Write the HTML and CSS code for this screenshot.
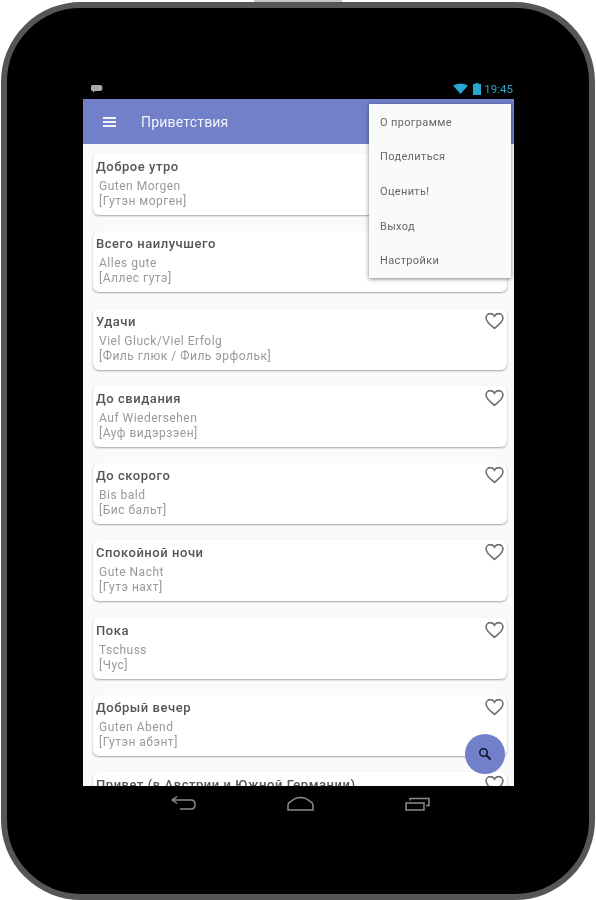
FILE: index.html
```html
<!DOCTYPE html>
<html lang="ru">
<head>
    <meta charset="UTF-8">
    <title>Приветствия</title>
    <link rel="stylesheet" href="styles.css">
</head>
<body>
    <div class="top-button"></div>
    <div class="device">
        <div class="status-bar">
            <svg class="notif" width="13" height="9" viewBox="0 0 13 9"><path d="M1 2.500 Q1 1 2.500 1 H10 Q12.500 1 12.500 4 Q12.500 7 10 7 L5 7 L3 8.500 L3 7 Q1 7 1 5.500 Z" fill="#a8a8a8"/></svg>
            <div class="status-right">
                <svg width="15" height="11" viewBox="0 0 15 11"><path d="M0 2.500 Q7.500 -1.500 15 2.500 L7.500 11 Z" fill="#2aa5cf"/></svg>
                <svg width="8" height="12" viewBox="0 0 8 12"><path d="M2.500 0 H5.500 V1 H8 V12 H0 V1 H2.500 Z" fill="#2aa5cf"/></svg>
                <span class="clock">19:45</span>
            </div>
        </div>

        <div class="screen">
            <div class="toolbar">
                <svg width="13" height="10" viewBox="0 0 13 10"><path d="M0 0 H13 V2 H0 Z M0 4 H13 V6 H0 Z M0 8 H13 V10 H0 Z" fill="#f2f3fb"/></svg>
                <span class="toolbar-title">Приветствия</span>
            </div>

            <div class="list">
                <div class="card">
                    <div class="card-title">Доброе утро</div>
                    <div class="card-text">Guten Morgen</div>
                    <div class="card-text">[Гутэн морген]</div>
                    <svg class="heart" viewBox="0 0 18 16"><use href="#heart"/></svg>
                </div>
                <div class="card">
                    <div class="card-title">Всего наилучшего</div>
                    <div class="card-text">Alles gute</div>
                    <div class="card-text">[Аллес гутэ]</div>
                    <svg class="heart" viewBox="0 0 18 16"><use href="#heart"/></svg>
                </div>
                <div class="card">
                    <div class="card-title">Удачи</div>
                    <div class="card-text">Viel Gluck/Viel Erfolg</div>
                    <div class="card-text">[Филь глюк / Филь эрфольк]</div>
                    <svg class="heart" viewBox="0 0 18 16"><use href="#heart"/></svg>
                </div>
                <div class="card">
                    <div class="card-title">До свидания</div>
                    <div class="card-text">Auf Wiedersehen</div>
                    <div class="card-text">[Ауф видэрзэен]</div>
                    <svg class="heart" viewBox="0 0 18 16"><use href="#heart"/></svg>
                </div>
                <div class="card">
                    <div class="card-title">До скорого</div>
                    <div class="card-text">Bis bald</div>
                    <div class="card-text">[Бис бальт]</div>
                    <svg class="heart" viewBox="0 0 18 16"><use href="#heart"/></svg>
                </div>
                <div class="card">
                    <div class="card-title">Спокойной ночи</div>
                    <div class="card-text">Gute Nacht</div>
                    <div class="card-text">[Гутэ нахт]</div>
                    <svg class="heart" viewBox="0 0 18 16"><use href="#heart"/></svg>
                </div>
                <div class="card">
                    <div class="card-title">Пока</div>
                    <div class="card-text">Tschuss</div>
                    <div class="card-text">[Чус]</div>
                    <svg class="heart" viewBox="0 0 18 16"><use href="#heart"/></svg>
                </div>
                <div class="card">
                    <div class="card-title">Добрый вечер</div>
                    <div class="card-text">Guten Abend</div>
                    <div class="card-text">[Гутэн абэнт]</div>
                    <svg class="heart" viewBox="0 0 18 16"><use href="#heart"/></svg>
                </div>
                <div class="card">
                    <div class="card-title">Привет (в Австрии и Южной Германии)</div>
                    <svg class="heart" viewBox="0 0 18 16"><use href="#heart"/></svg>
                </div>
            </div>

            <div class="menu">
                <div class="menu-item">О программе</div>
                <div class="menu-item">Поделиться</div>
                <div class="menu-item">Оценить!</div>
                <div class="menu-item">Выход</div>
                <div class="menu-item">Настройки</div>
            </div>

            <div class="fab">
                <svg width="14" height="14" viewBox="0 0 14 14"><circle cx="5.500" cy="5.500" r="3.700" fill="none" stroke="#10162e" stroke-width="1.600"/><path d="M8.300 8.300 L12.500 12.500" stroke="#10162e" stroke-width="2"/></svg>
            </div>
        </div>

        <div class="nav-bar">
            <svg width="25" height="15" viewBox="0 0 25 15" fill="none" stroke="#8c8c8c" stroke-width="1.500"><path d="M1 4 H20 Q24 4 24 8.500 Q24 13 20 13 H9 M6 0.500 L1.200 4 L6 7.500"/></svg>
            <svg width="27" height="15" viewBox="0 0 27 15" fill="none" stroke="#8c8c8c" stroke-width="1.500"><path d="M1 14 V9 Q1 7 3 6 Q8 1.500 13.500 1.500 Q19 1.500 24 6 Q26 7 26 9 V14 Z"/></svg>
            <svg width="25" height="14" viewBox="0 0 25 14" fill="none" stroke="#8c8c8c" stroke-width="1.500"><path d="M1 6 H19 V13 H1 Z M5 3.500 V1.500 H24 V8.500 H21"/></svg>
        </div>
    </div>

    <svg class="defs" width="0" height="0">
        <symbol id="heart" viewBox="0 0 18 16">
            <path d="M9 15 C3 10 1 8 1 5 C1 2.500 3 1 5 1 C6.800 1 8.200 2 9 3.500 C9.800 2 11.200 1 13 1 C15 1 17 2.500 17 5 C17 8 15 10 9 15 Z" fill="none" stroke="#6e6e6e" stroke-width="1.500"/>
        </symbol>
    </svg>
</body>
</html>
```

FILE: styles.css
```css
body {
    margin: 0;
    height: 900px;
    overflow: hidden;
    background: #fff;
    font-family: "Roboto", "Liberation Sans", sans-serif;
}

.top-button {
    position: absolute;
    top: 0;
    left: 254px;
    width: 88px;
    height: 2px;
    background: #c4c4c4;
}

.defs {
    position: absolute;
}

/* Корпус планшета */
.device {
    box-sizing: border-box;
    width: 594px;
    height: 898px;
    margin: 2px 0 0 1px;
    padding: 72px 75px 0 76px;
    background: #000;
    border: 6px solid #565656;
    border-radius: 80px;
}

.status-bar {
    display: flex;
    align-items: center;
    justify-content: space-between;
    height: 19px;
    filter: blur(0.4px);
}

.notif {
    margin: 0 0 2px 7px;
}

.status-right {
    display: flex;
    align-items: center;
    gap: 5px;
    margin-bottom: 2px;
}

.clock {
    margin: 0 1px 0 -2px;
    color: #2fa3cc;
    font-size: 11.5px;
    line-height: 12px;
}

/* Экран */
.screen {
    position: relative;
    height: 687px;
    overflow: hidden;
    background: #fafafa;
    filter: blur(0.4px);
}

.toolbar {
    display: flex;
    align-items: center;
    gap: 25px;
    height: 45px;
    padding-left: 20px;
    background: #7180c9;
}

.toolbar-title {
    color: #f2f3fb;
    font-size: 14px;
    letter-spacing: 0.2px;
}

.list {
    display: flex;
    flex-direction: column;
    gap: 16.25px;
    padding: 10px 7px 0 10px;
}

.card {
    position: relative;
    box-sizing: border-box;
    flex: none;
    height: 61px;
    padding: 5px 3px 0;
    background: #fff;
    border-radius: 6px;
    box-shadow: 0 1px 2px rgba(0, 0, 0, 0.35);
}

.card-title {
    margin-bottom: 4px;
    color: #555;
    font-size: 13px;
    font-weight: 500;
    line-height: 16px;
    letter-spacing: 0.55px;
}

.card-text {
    padding-left: 3px;
    color: #999;
    font-size: 12px;
    line-height: 15px;
    letter-spacing: 0.5px;
}

.heart {
    position: absolute;
    top: 3px;
    right: 3px;
    width: 19px;
    height: 18px;
}

.menu {
    position: absolute;
    top: 5px;
    left: 286px;
    width: 142px;
    padding-top: 1px;
    background: #fafafa;
    box-shadow: 0 1px 4px rgba(0, 0, 0, 0.5);
}

.menu-item {
    display: flex;
    align-items: center;
    height: 34.6px;
    padding-left: 11px;
    color: #666;
    font-size: 11px;
    letter-spacing: 0.35px;
}

.fab {
    position: absolute;
    top: 635px;
    left: 382px;
    display: flex;
    align-items: center;
    justify-content: center;
    width: 40px;
    height: 40px;
    background: #7180c9;
    border-radius: 50%;
}

.nav-bar {
    display: flex;
    align-items: center;
    justify-content: space-between;
    padding: 10px 84px 0 88px;
    filter: blur(0.3px);
}
```
